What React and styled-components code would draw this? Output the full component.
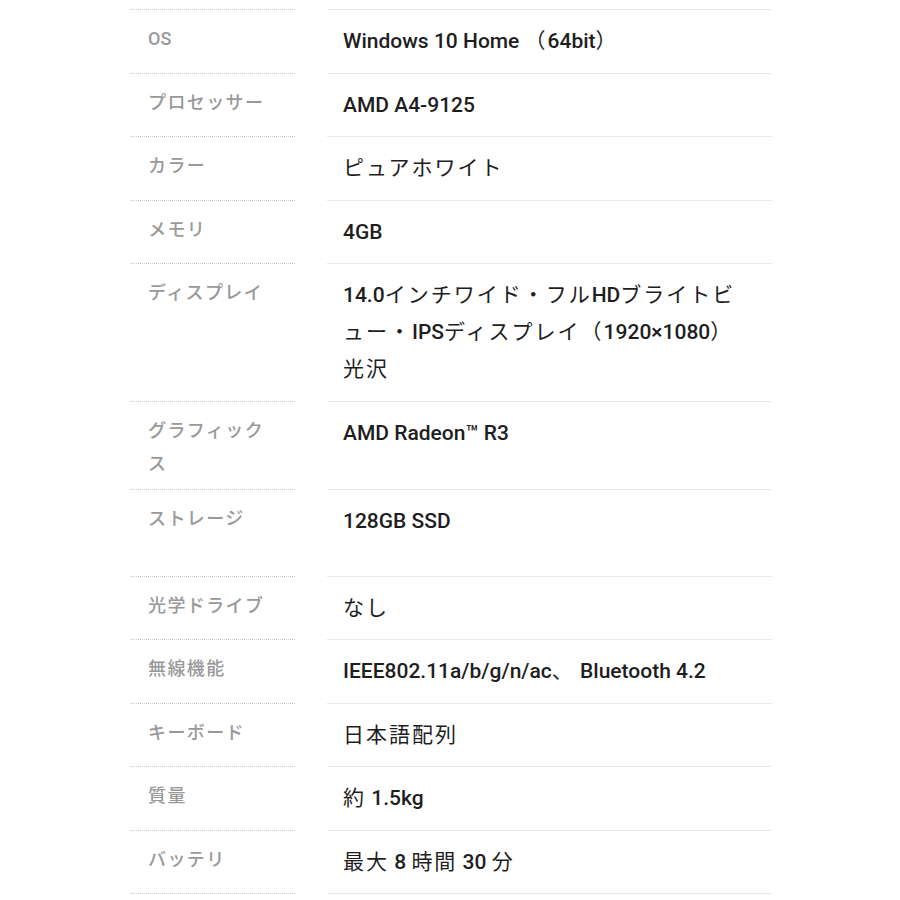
import React from "react";
import styled, { createGlobalStyle } from "styled-components";

const GlobalStyle = createGlobalStyle`
  body {
    margin: 0;
    background: #ffffff;
    font-family: "Roboto", "Noto Sans CJK JP", sans-serif;
  }
`;

const Page = styled.div`
  padding: 9px 0 0 131px;
`;

const Table = styled.div`
  display: grid;
  grid-template-columns: 164px 445px;
  column-gap: 32px;
  width: 641px;
`;

const Row = styled.div`
  display: contents;
`;

const Label = styled.div`
  border-top: 1px dotted #c8c8c8;
  border-bottom: ${(p) => (p.$last ? "1px dotted #c8c8c8" : "none")};
  padding: 12px 17px 9px;
  min-height: ${(p) => p.$minHeight || 0}px;
  box-sizing: border-box;
  font-size: 18px;
  line-height: 33px;
  font-weight: 500;
  color: #999999;
`;

const Value = styled.div`
  border-top: 1px solid #e8e8e8;
  border-bottom: ${(p) => (p.$last ? "1px solid #e8e8e8" : "none")};
  padding: 13px 24px 12.5px 16px;
  font-size: 21px;
  line-height: 37px;
  font-weight: 500;
  color: #1e1e1e;
`;

// Japanese runs sit a bit wider than the latin ones
const Jp = styled.span`
  letter-spacing: ${(p) => (p.$small ? "1.4px" : "2px")};
  font-weight: ${(p) => (p.$small ? 500 : 400)};
`;

const jpRun = /([\u3000-\u30ff\u4e00-\u9fff\uff00-\uffef]+)/;

function Text({ children, small }) {
  return children
    .split(jpRun)
    .filter(Boolean)
    .map((part, i) =>
      jpRun.test(part) ? (
        <Jp key={i} $small={small}>
          {part}
        </Jp>
      ) : (
        part
      )
    );
}

const specs = [
  ["OS", ["Windows 10 Home （64bit）"]],
  ["プロセッサー", ["AMD A4-9125"]],
  ["カラー", ["ピュアホワイト"]],
  ["メモリ", ["4GB"]],
  ["ディスプレイ", ["14.0インチワイド・フルHDブライトビュー・IPSディスプレイ（1920×1080）", "光沢"]],
  ["グラフィックス", ["AMD Radeon™ R3"]],
  ["ストレージ", ["128GB SSD"], 87],
  ["光学ドライブ", ["なし"]],
  ["無線機能", ["IEEE802.11a/b/g/n/ac、 Bluetooth 4.2"]],
  ["キーボード", ["日本語配列"]],
  ["質量", ["約 1.5kg"]],
  ["バッテリ", ["最大 8 時間 30 分"]],
];

export default function App() {
  return (
    <Page>
      <GlobalStyle />
      <Table>
        {specs.map(([label, lines, minHeight], i) => {
          const last = i === specs.length - 1;
          return (
            <Row key={label}>
              <Label $last={last} $minHeight={minHeight}>
                <Text small>{label}</Text>
              </Label>
              <Value $last={last}>
                {lines.map((line, j) => (
                  <React.Fragment key={j}>
                    {j > 0 && <br />}
                    <Text>{line}</Text>
                  </React.Fragment>
                ))}
              </Value>
            </Row>
          );
        })}
      </Table>
    </Page>
  );
}
